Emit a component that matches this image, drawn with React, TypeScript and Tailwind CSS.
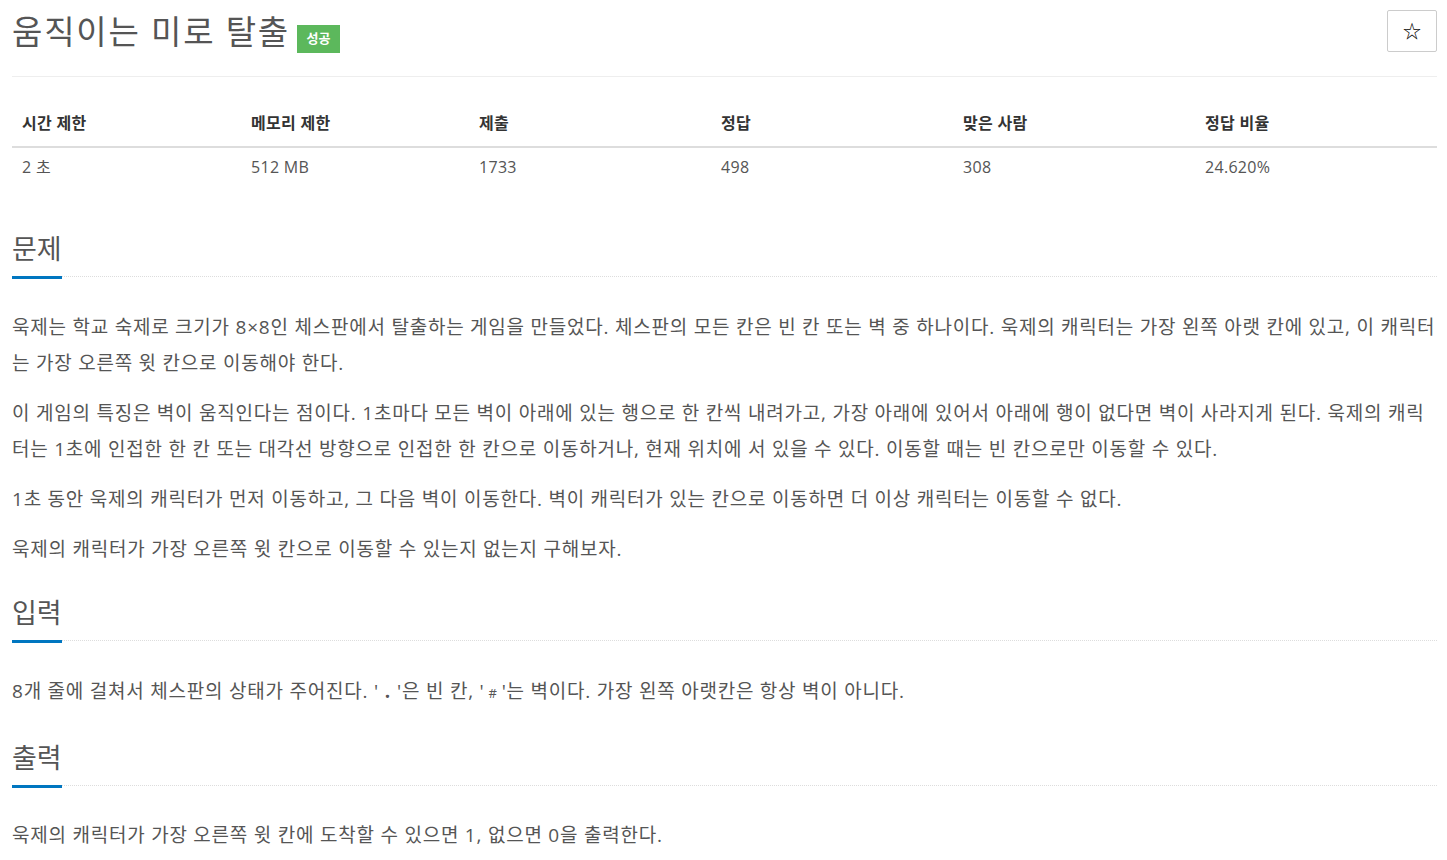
import React from 'react';

const stats = [
  { label: '시간 제한', value: '2 초' },
  { label: '메모리 제한', value: '512 MB' },
  { label: '제출', value: '1733' },
  { label: '정답', value: '498' },
  { label: '맞은 사람', value: '308' },
  { label: '정답 비율', value: '24.620%' },
];

const SectionTitle: React.FC<{ title: string }> = ({ title }) => (
  <div className="border-b border-dotted border-[#ddd]">
    <h2 className="inline-block -mb-[3px] border-b-[3px] border-[#0076c0] pb-[9px] text-[27px] leading-[36px] font-normal text-[#555]">
      {title}
    </h2>
  </div>
);

const App: React.FC = () => {
  return (
    <div
      className="min-h-screen bg-white pl-[12px] pr-[10px] text-[#555]"
      style={{ fontFamily: '"Open Sans", "Noto Sans CJK KR", sans-serif' }}
    >
      {/* header */}
      <div className="flex items-start justify-between border-b border-[#eee] pt-[10px] pb-[24px]">
        <div className="flex h-[42px] items-center">
          <h1 className="pt-[2px] text-[33px] leading-[42px] font-normal tracking-[1.8px] text-[#555]">움직이는 미로 탈출</h1>
          <span className="ml-[7px] mt-[16px] flex h-[28px] w-[43px] items-center justify-center bg-[#5cb85c] text-[13px] font-bold text-white">
            성공
          </span>
        </div>
        <button className="flex h-[42px] w-[50px] items-center justify-center rounded-[2px] border border-[#ccc] bg-white text-[18px] text-black">
          ☆
        </button>
      </div>

      {/* stats table */}
      <div className="mt-[24px] grid grid-cols-[229px_228px_242px_242px_242px_242px] text-[16px] tracking-[0.3px]">
        {stats.map((s) => (
          <div key={s.label} className="border-b-2 border-[#ddd] px-[10px] pt-[11px] pb-[12px] leading-[22px] font-bold text-[#333]">
            {s.label}
          </div>
        ))}
        {stats.map((s) => (
          <div key={s.value} className="px-[10px] py-[8px] leading-[22px] text-[#555]">
            {s.value}
          </div>
        ))}
      </div>

      {/* 문제 */}
      <section className="mt-[45px]">
        <SectionTitle title="문제" />
        <div className="mt-[32px] text-[19px] leading-[36px] tracking-[0.77px]">
          <p className="mb-[14px]">
            욱제는 학교 숙제로 크기가 8×8인 체스판에서 탈출하는 게임을 만들었다. 체스판의 모든 칸은 빈 칸 또는 벽 중 하나이다. 욱제의 캐릭터는 가장 왼쪽 아랫 칸에 있고, 이 캐릭터는 가장 오른쪽 윗 칸으로 이동해야 한다.
          </p>
          <p className="mb-[14px]">
            이 게임의 특징은 벽이 움직인다는 점이다. 1초마다 모든 벽이 아래에 있는 행으로 한 칸씩 내려가고, 가장 아래에 있어서 아래에 행이 없다면 벽이 사라지게 된다. 욱제의 캐릭터는 1초에 인접한 한 칸 또는 대각선 방향으로 인접한 한 칸으로 이동하거나, 현재 위치에 서 있을 수 있다. 이동할 때는 빈 칸으로만 이동할 수 있다.
          </p>
          <p className="mb-[14px]">
            1초 동안 욱제의 캐릭터가 먼저 이동하고, 그 다음 벽이 이동한다. 벽이 캐릭터가 있는 칸으로 이동하면 더 이상 캐릭터는 이동할 수 없다.
          </p>
          <p className="mb-[14px]">욱제의 캐릭터가 가장 오른쪽 윗 칸으로 이동할 수 있는지 없는지 구해보자.</p>
        </div>
      </section>

      {/* 입력 */}
      <section className="mt-[28px]">
        <SectionTitle title="입력" />
        <div className="mt-[32px] text-[19px] leading-[36px] tracking-[0.77px]">
          <p className="mb-[14px]">
            8개 줄에 걸쳐서 체스판의 상태가 주어진다. '<span className="px-[6px] font-bold">.</span>'은 빈 칸, '
            <span className="px-[4px] text-[13px]">#</span>'는 벽이다. 가장 왼쪽 아랫칸은 항상 벽이 아니다.
          </p>
        </div>
      </section>

      {/* 출력 */}
      <section className="mt-[29px]">
        <SectionTitle title="출력" />
        <div className="mt-[31px] text-[19px] leading-[36px] tracking-[0.77px]">
          <p className="mb-[14px]">욱제의 캐릭터가 가장 오른쪽 윗 칸에 도착할 수 있으면 1, 없으면 0을 출력한다.</p>
        </div>
      </section>
    </div>
  );
};

export default App;
